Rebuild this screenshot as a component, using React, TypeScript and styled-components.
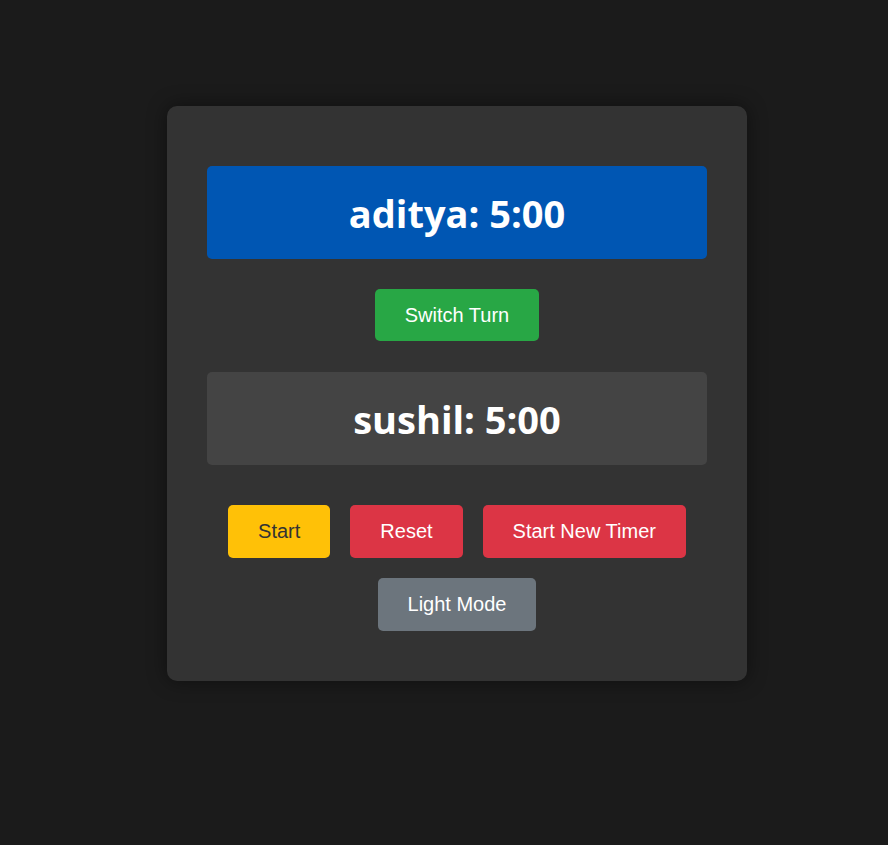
import React from "react";
import styled, { createGlobalStyle } from "styled-components";

const Global = createGlobalStyle`
  html, body { margin: 0; padding: 0; background: #1b1b1b; }
  body { font-family: "Liberation Sans", Arial, sans-serif; }
`;

const Page = styled.div`
  min-height: 845px;
  box-sizing: border-box;
  padding: 106px 0 0 167px;
`;

const Card = styled.div`
  width: 580px;
  box-sizing: border-box;
  background: #333333;
  border-radius: 10px;
  padding: 60px 40px 50px;
  box-shadow: 0 0 20px rgba(0, 0, 0, 0.45);
  display: flex;
  flex-direction: column;
  align-items: center;
`;

const TimerBox = styled.h2<{ $active?: boolean }>`
  margin: 0;
  width: 100%;
  height: 93px;
  box-sizing: border-box;
  padding-top: 0;
  border-radius: 5px;
  background: ${(p) => (p.$active ? "#0056b3" : "#444444")};
  color: #ffffff;
  font-family: "Open Sans", "Noto Sans", sans-serif;
  font-weight: 700;
  font-size: 38px;
  display: flex;
  align-items: center;
  justify-content: center;
`;

const Button = styled.button<{ $bg: string; $fg?: string; $h?: number }>`
  background: ${(p) => p.$bg};
  color: ${(p) => p.$fg || "#ffffff"};
  border: none;
  border-radius: 5px;
  font-family: "Liberation Sans", Arial, sans-serif;
  font-size: 20px;
  height: ${(p) => p.$h || 53}px;
  padding: 0 30px;
  cursor: pointer;
`;

const SwitchRow = styled.div`
  margin: 30px 0 31px;
  display: flex;
  justify-content: center;
`;

const Controls = styled.div`
  margin-top: 40px;
  display: flex;
  gap: 20px;
  justify-content: center;
`;

const ModeRow = styled.div`
  margin-top: 20px;
  display: flex;
  justify-content: center;
`;

export default function App() {
  return (
    <>
      <Global />
      <Page>
        <Card>
          <TimerBox $active>aditya: 5:00</TimerBox>
          <SwitchRow>
            <Button $bg="#28a745" $h={52}>Switch Turn</Button>
          </SwitchRow>
          <TimerBox>sushil: 5:00</TimerBox>
          <Controls>
            <Button $bg="#ffc107" $fg="#333333">Start</Button>
            <Button $bg="#dc3545">Reset</Button>
            <Button $bg="#dc3545">Start New Timer</Button>
          </Controls>
          <ModeRow>
            <Button $bg="#6c757d">Light Mode</Button>
          </ModeRow>
        </Card>
      </Page>
    </>
  );
}
